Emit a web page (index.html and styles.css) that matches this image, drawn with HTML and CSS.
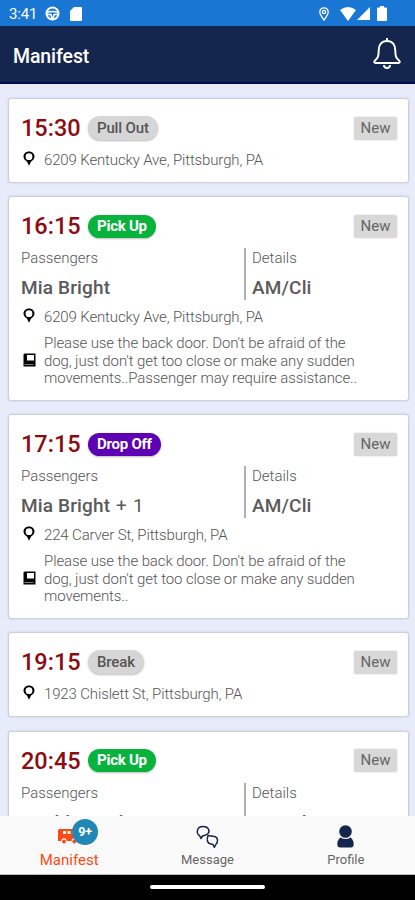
FILE: index.html
```html
<!DOCTYPE html>
<html lang="en">
<head>
<meta charset="utf-8">
<title>Manifest</title>
<link rel="stylesheet" href="styles.css">
</head>
<body>
<svg class="sprite" aria-hidden="true">
  <symbol id="pin" viewBox="0 0 12 15"><path fill-rule="evenodd" d="M6 .5C2.800.5.500 2.700.500 5.500c0 2.300 1.500 3.700 3.400 5.100L6 14.800l2.100-4.200c1.900-1.400 3.400-2.800 3.400-5.100C11.500 2.700 9.200.5 6 .5zM6 2.300a3.300 3.300 0 1 1 0 6.800 3.300 3.300 0 0 1 0-6.800z"/></symbol>
  <symbol id="note" viewBox="0 0 13 14"><path fill-rule="evenodd" d="M1.500.5h11V13.500H.5V1.500zM4 2v5.500h7V2z"/><path stroke="#999" stroke-width=".8" d="M1.500 11.500h9"/></symbol>
</svg>
<div class="phone">
  <div class="status">
    <span class="clock">3:41</span>
    <svg class="s-wheel" width="15" height="15" viewBox="0 0 15 15" fill="none" stroke="#fff"><circle cx="7.500" cy="7.500" r="6" stroke-width="2"/><path d="M2 6.500q5.500-2 11 0M2 8.500h4l1 4.500h1l1-4.500h4" stroke-width="1.500"/></svg>
    <svg class="s-card" width="12" height="14" viewBox="0 0 12 14"><path fill="#fff" d="M4 0h7q1 0 1 1v12q0 1-1 1H1q-1 0-1-1V4z"/></svg>
    <svg class="s-loc" width="10" height="14" viewBox="0 0 10 14" fill="none" stroke="#fff" stroke-width="1.300"><path d="M5 13C2.500 9.500.8 7.500.8 5a4.200 4.200 0 0 1 8.400 0c0 2.500-1.700 4.500-4.200 8z"/><circle cx="5" cy="5" r="1.600"/></svg>
    <svg class="s-wifi" width="16" height="14" viewBox="0 0 16 14"><path fill="#fff" d="M0 3q8-6 16 0L8 14z"/></svg>
    <svg class="s-cell" width="13" height="13" viewBox="0 0 13 13"><path fill="#fff" d="M13 0v13H0z"/></svg>
    <svg class="s-batt" width="10" height="15" viewBox="0 0 10 15"><path fill="#fff" d="M3 0h4v1.500h2q1 0 1 1V14q0 1-1 1H1q-1 0-1-1V2.500q0-1 1-1h2z"/></svg>
  </div>
  <header class="appbar">
    <h1>Manifest</h1>
    <svg width="30" height="34" viewBox="0 0 30 34" fill="none" stroke="#fff" stroke-width="2" stroke-linejoin="round"><path d="M15 1v3M15 4c-5.500 0-8.300 4-8.300 9.500 0 6-.8 7.500-4 10.300-.8 1-.5 2.200.8 2.200h23c1.300 0 1.600-1.200.8-2.200-3.200-2.800-4-4.300-4-10.300C23.300 8 20.500 4 15 4zM12 28a3 3 0 0 0 6 0"/></svg>
  </header>
  <main class="list">
    <article class="card">
      <div class="head"><span class="time">15:30</span><span class="pill grey">Pull Out</span><span class="new">New</span></div>
      <div class="addr"><svg><use href="#pin"/></svg><span>6209 Kentucky Ave, Pittsburgh, PA</span></div>
    </article>
    <article class="card tall">
      <div class="head"><span class="time">16:15</span><span class="pill green">Pick Up</span><span class="new">New</span></div>
      <div class="cols">
        <div class="who"><div class="label">Passengers</div><div class="name">Mia Bright</div></div>
        <div class="what"><div class="label">Details</div><div class="name">AM/Cli</div></div>
      </div>
      <div class="addr"><svg><use href="#pin"/></svg><span>6209 Kentucky Ave, Pittsburgh, PA</span></div>
      <div class="note"><svg><use href="#note"/></svg><p>Please use the back door. Don't be afraid of the<br>dog, just don't get too close or make any sudden<br>movements..Passenger may require assistance..</p></div>
    </article>
    <article class="card tall">
      <div class="head"><span class="time">17:15</span><span class="pill purple">Drop Off</span><span class="new">New</span></div>
      <div class="cols">
        <div class="who"><div class="label">Passengers</div><div class="name">Mia Bright <span class="extra">+ 1</span></div></div>
        <div class="what"><div class="label">Details</div><div class="name">AM/Cli</div></div>
      </div>
      <div class="addr"><svg><use href="#pin"/></svg><span>224 Carver St, Pittsburgh, PA</span></div>
      <div class="note"><svg><use href="#note"/></svg><p>Please use the back door. Don't be afraid of the<br>dog, just don't get too close or make any sudden<br>movements..</p></div>
    </article>
    <article class="card">
      <div class="head"><span class="time">19:15</span><span class="pill grey">Break</span><span class="new">New</span></div>
      <div class="addr"><svg><use href="#pin"/></svg><span>1923 Chislett St, Pittsburgh, PA</span></div>
    </article>
    <article class="card tall">
      <div class="head"><span class="time">20:45</span><span class="pill green">Pick Up</span><span class="new">New</span></div>
      <div class="cols">
        <div class="who"><div class="label">Passengers</div><div class="name">Freddy Cook</div></div>
        <div class="what"><div class="label">Details</div><div class="name">AM/Cli</div></div>
      </div>
    </article>
  </main>
  <nav class="tabs">
    <div class="tab active">
      <div class="ico"><svg width="22" height="15" viewBox="0 0 22 15"><path fill="#fb4a14" fill-rule="evenodd" d="M1.500 0H16l5 6v6h-2a2.700 2.700 0 0 0-5.400 0H8.700a2.700 2.700 0 0 0-5.400 0H0V1.500Q0 0 1.500 0zM5 2v3h3V2zM9.500 2v3h3V2zM14 2v3h4l-2.500-3z"/><circle cx="6" cy="12.500" r="1.900" fill="#fb4a14"/><circle cx="16.300" cy="12.500" r="1.900" fill="#fb4a14"/></svg><span class="badge">9+</span></div>
      <span class="caption">Manifest</span>
    </div>
    <div class="tab">
      <div class="ico"><svg width="24" height="24" viewBox="0 0 24 24" fill="#fafafa" stroke="#17234d" stroke-width="1.500" stroke-linejoin="round"><path d="M4.500 10.500C1 8.500 1.500 1.500 8 1.500s7 5.500 4.500 7.500-3 1-5 2L6 13.500z"/><path d="M20.800 19.500c2.700-2 2.200-7.500-1.300-8-2.500-.5-5-.5-6.500-1-1.500 4-1 8 3 8.500l2 .5 1.300 2.800z"/></svg></div>
      <span class="caption">Message</span>
    </div>
    <div class="tab">
      <div class="ico"><svg width="17" height="23" viewBox="0 0 17 23" fill="#14264d"><circle cx="8.500" cy="6.500" r="6.300"/><path d="M3.500 12.500q5 3 10 0 3.200 2.500 3.200 6.500 0 3.500-3 3.500H3.300q-3 0-3-3.500 0-4 3.200-6.500z"/></svg></div>
      <span class="caption">Profile</span>
    </div>
  </nav>
  <div class="gesture"><i></i></div>
</div>
</body>
</html>
```
FILE: styles.css
```css
* { box-sizing: border-box; }
body { margin: 0; font-family: Roboto, "Liberation Sans", sans-serif; background: #000; }
.sprite { position: absolute; width: 0; height: 0; }
.phone { width: 415px; height: 900px; display: flex; flex-direction: column; overflow: hidden; }

.status { flex: none; height: 26px; background: #1976d2; color: #fff; display: flex; align-items: center; padding: 1px 28px 0 9px; }
.clock { font-size: 15px; width: 36px; letter-spacing: -.2px; }
.s-card { margin-left: 10px; }
.s-loc { margin-left: auto; }
.s-wifi { margin-left: 11px; }
.s-cell { margin-left: 1px; }
.s-batt { margin-left: 7px; }

.appbar { flex: none; height: 58px; background: #14264d; border-bottom: 2px solid #04094b; display: flex; align-items: center; justify-content: space-between; padding: 0 13px; color: #fff; }
.appbar h1 { margin: 5px 0 0; font-size: 19.500px; font-weight: 500; line-height: 24px; letter-spacing: -.1px; }

.list { flex: 1; min-height: 0; overflow: hidden; background: #e8ebf9; padding: 15px 7px 0 9px; display: flex; flex-direction: column; gap: 15.400px; }
.card { flex: none; height: 83px; background: #fff; border-radius: 2px; box-shadow: 0 0 2px 1px #c3c6d3; padding: 16px 11px 0 12px; }
.card.tall { height: 202.500px; }
.head { display: flex; align-items: center; height: 26px; }
.time { width: 67px; font-size: 23.500px; font-weight: 500; color: #8b0d12; line-height: 26px; }
.pill { height: 24px; line-height: 24px; border-radius: 12px; padding: 0 9px; font-size: 15px; font-weight: 500; letter-spacing: -.15px; box-shadow: 0 1px 2px #bbb; white-space: nowrap; }
.grey { background: #d6d6d6; color: #555; }
.green, .purple { height: 23px; line-height: 23px; letter-spacing: -.25px; color: #fff; font-weight: 700; }
.green { background: #08b33d; }
.purple { background: #5e00b3; }
.new { margin-left: auto; width: 43px; height: 23px; line-height: 23px; text-align: center; background: #d8d8d8; color: #666; font-size: 15px; border-radius: 2px; box-shadow: 0 0 2px #ccc; }

.cols { display: flex; margin-top: 9px; height: 52px; }
.who { width: 225px; border-right: 2px solid #b0b0b0; }
.what { padding-left: 6px; }
.label { font-size: 15px; font-weight: 300; color: #555; line-height: 20px; }
.name { margin-top: 9px; font-size: 19px; line-height: 22px; font-weight: 500; color: #5a5a5a; white-space: nowrap; letter-spacing: .15px; }
.extra { font-weight: 400; margin-left: 1px; letter-spacing: .7px; }

.addr { display: flex; align-items: center; height: 20px; margin-top: 9px; font-size: 15px; font-weight: 300; color: #555; white-space: nowrap; letter-spacing: -.14px; }
.tall .addr { margin-top: 7px; }
.addr svg { width: 12px; height: 15px; margin: 0 9px 3px 2px; flex: none; fill: #000; }
.note { display: flex; align-items: center; margin-top: 8px; font-size: 15px; font-weight: 300; color: #555; line-height: 17.500px; white-space: nowrap; letter-spacing: -.1px; }
.note svg { width: 13px; height: 14px; margin: 0 8px 3px 2px; flex: none; fill: #000; }
.note p { margin: 0; }

.tabs { flex: none; height: 59px; background: #fafafa; display: grid; grid-template-columns: repeat(3, 1fr); border-bottom: 1px solid #bbb; }
.tab { display: flex; flex-direction: column; align-items: center; font-size: 13px; color: #666; }
.ico { height: 36px; display: flex; align-items: center; padding-top: 5px; position: relative; }
.active { color: #fb4a14; }
.active .caption { font-size: 15px; line-height: 16px; }
.badge { position: absolute; left: 14px; top: 3px; width: 26px; height: 26px; border-radius: 50%; background: #2188b5; color: #fff; font-size: 12.500px; font-weight: 700; line-height: 26px; text-align: center; }
.gesture { flex: none; height: 25px; background: #000; display: flex; justify-content: center; padding-top: 10px; }
.gesture i { width: 115px; height: 4px; border-radius: 2px; background: #fff; }
```
